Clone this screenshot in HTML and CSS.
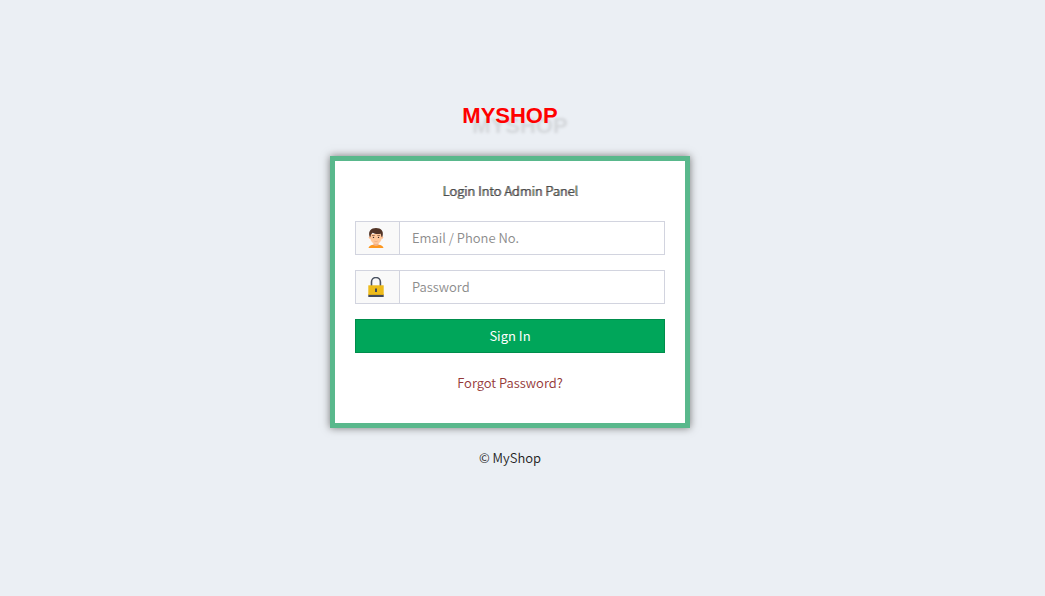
FILE: index.html
```html
<!DOCTYPE html>
<html lang="en">
<head>
<meta charset="utf-8">
<title>MyShop Admin Login</title>
<link rel="stylesheet" href="styles.css">
</head>
<body>
<main class="login">
  <h1 class="logo">MYSHOP</h1>
  <section class="card">
    <h2 class="card-title">Login Into Admin Panel</h2>
    <form class="form">
      <div class="field">
        <label class="addon" for="email" aria-label="Email or phone number">
          <svg class="icon" viewBox="0 0 20 20" aria-hidden="true">
            <path fill="#fd971f" d="M2.500 20c.2-2.200 2.500-3 5-3.300h5c2.500.3 4.800 1.100 5 3.300z"/>
            <path fill="#f3b187" d="M7.500 13h5v4.200Q10 18.700 7.500 17.200z"/>
            <path fill="#ffc89b" d="M4.300 6h11.400v3.500c0 4-3 6.500-5.700 6.500s-5.700-2.500-5.700-6.500z"/>
            <circle fill="#fcb98b" cx="4" cy="9.500" r="1.200"/>
            <circle fill="#fcb98b" cx="16" cy="9.500" r="1.200"/>
            <path fill="#533527" d="M3.500 8.500C2 3 5 0 10 0c5.200 0 8 3 6.500 8.500l-1 .4-.8-3.200c-3.500.8-6 .3-8-1L5 6.500l-.5 2.400z"/>
            <path fill="#8a593f" d="M6 7.300h2.700v.6H6zm5.300 0H14v.6h-2.700z"/>
            <circle fill="#3f3029" cx="7.500" cy="9.400" r=".7"/>
            <circle fill="#3f3029" cx="12.500" cy="9.400" r=".7"/>
            <path fill="none" stroke="#e8a77c" stroke-width=".7" d="M8.300 13.200q1.700 1 3.400 0"/>
          </svg>
        </label>
        <input class="input" id="email" type="text" placeholder="Email / Phone No.">
      </div>
      <div class="field">
        <label class="addon" for="password" aria-label="Password">
          <svg class="icon" viewBox="0 0 20 20" aria-hidden="true">
            <path fill="none" stroke="#4b5362" stroke-width="1.600" d="M5.500 9V5a4.300 4.300 0 0 1 8.900 0v4"/>
            <path fill="#edbb1b" d="M2.300 8.300h15.400V18H2.300z"/>
            <path fill="#d9a91d" d="M2.300 17h15.400v1H2.300z"/>
            <path fill="#434a59" d="M2.300 18h15.400v2H2.300zM9 11.500h2V15H9z"/>
          </svg>
        </label>
        <input class="input" id="password" type="password" placeholder="Password">
      </div>
      <button class="submit" type="submit">Sign In</button>
    </form>
    <a class="forgot" href="#">Forgot Password?</a>
  </section>
  <footer class="footer">© MyShop</footer>
</main>
</body>
</html>
```
FILE: styles.css
```css
* {
  box-sizing: border-box;
}

body {
  margin: 0;
  min-height: 100vh;
  padding: 100px 25px 20px 0;
  background: #ebeff4;
  color: #222;
  font-family: "Noto Sans CJK SC", "Noto Sans", sans-serif;
  font-size: 13px;
  font-weight: 350;
  line-height: 20px;
}

.login {
  width: 100%;
  max-width: 360px;
  margin: 0 auto;
  text-align: center;
}

.logo {
  margin: 0 0 24px;
  color: #f00;
  font-family: "Liberation Sans", Arial, sans-serif;
  font-size: 22px;
  font-weight: 700;
  line-height: 32px;
  text-shadow: 10px 10px 3px #d3d6da;
}

.card {
  padding: 20px 20px 30px;
  border: 5px solid #59b88c;
  background: #fff;
  box-shadow: 0 0 8px #777;
}

.card-title {
  margin: 0 0 20px;
  color: #444;
  font-size: 13px;
  font-weight: 300;
  line-height: 20px;
  text-shadow: 1px 0 0 #555;
}

.form {
  display: grid;
  gap: 15px;
  margin-bottom: 20px;
}

.field {
  display: flex;
  height: 34px;
  border: 1px solid #d2d4df;
}

.addon {
  display: flex;
  align-items: center;
  justify-content: center;
  flex: none;
  width: 44px;
  padding-right: 3px;
  border-right: 1px solid #d2d4df;
  background: #f9f9f9;
}

.icon {
  width: 20px;
  height: 20px;
}

.input {
  flex: 1;
  min-width: 0;
  padding: 0 12px;
  border: 0;
  background: #fff;
  color: #555;
  font: inherit;
}

.input::placeholder {
  color: #8c8c8c;
  opacity: 1;
}

.submit {
  height: 34px;
  border: 1px solid #008d4c;
  background: #00a65a;
  color: #fff;
  font: inherit;
  font-weight: 400;
  cursor: pointer;
}

.forgot {
  display: block;
  color: #943838;
  text-decoration: none;
}

.footer {
  margin-top: 20px;
}
```
